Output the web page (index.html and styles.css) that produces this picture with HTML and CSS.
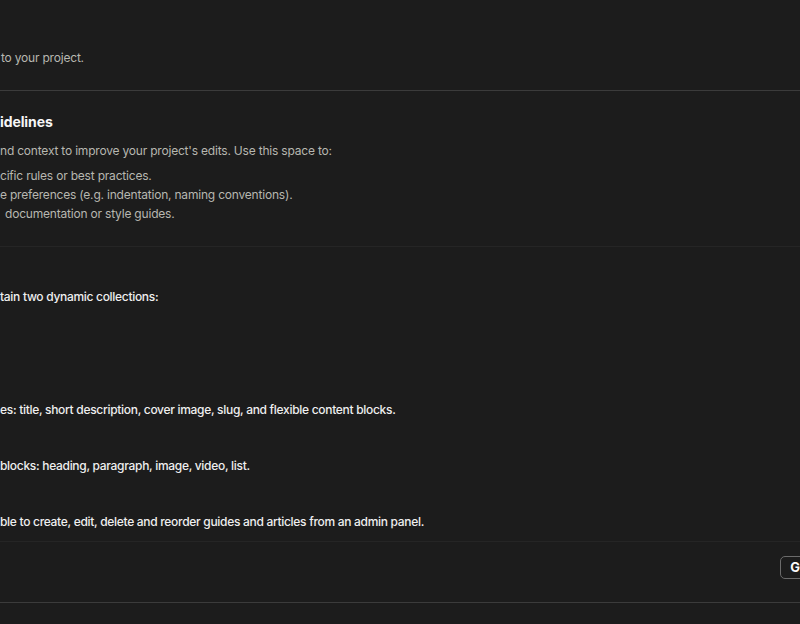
FILE: index.html
```html
<!DOCTYPE html>
<html lang="en">
<head>
  <meta charset="UTF-8" />
  <title>Project settings</title>
  <link rel="stylesheet" href="styles.css">
</head>
<body>
  <div class="panel">
    <div class="intro">
      <p class="muted">to your project.</p>
    </div>

    <div class="guidelines">
      <h2>idelines</h2>
      <p class="muted">nd context to improve your project's edits. Use this space to:</p>
      <ul class="muted">
        <li>cific rules or best practices.</li>
        <li>e preferences (e.g. indentation, naming conventions).</li>
        <li class="indent">documentation or style guides.</li>
      </ul>
    </div>

    <div class="prompt">tain two dynamic collections:





es: title, short description, cover image, slug, and flexible content blocks.


blocks: heading, paragraph, image, video, list.


ble to create, edit, delete and reorder guides and articles from an admin panel.</div>

    <div class="actions">
      <button class="btn">G</button>
    </div>
  </div>
</body>
</html>
```

FILE: styles.css
```css
html, body {
  margin: 0;
  padding: 0;
  background: #1c1c1c;
  font-family: 'Inter', 'Noto Sans', sans-serif;
  font-size: 12px;
  letter-spacing: -0.2px;
  overflow: hidden;
}

.panel {
  width: 810px;
  color: #ececec;
}

p {
  margin: 0;
}

.muted {
  color: #b7b7b0;
}

.intro {
  padding: 48px 0 23px 1px;
  line-height: 19px;
  border-bottom: 1px solid #3b3b3b;
}

.guidelines {
  padding: 20px 0 23px;
  border-bottom: 1px solid #252525;
}

.guidelines h2 {
  margin: 0 0 9px;
  font-size: 14px;
  line-height: 21px;
  font-weight: 700;
  letter-spacing: -0.1px;
  color: #f6f6f6;
}

.guidelines p {
  line-height: 19px;
}

.guidelines ul {
  list-style: none;
  margin: 6px 0 0;
  padding: 0;
  line-height: 19px;
}

.guidelines li.indent {
  padding-left: 5px;
}

.prompt {
  white-space: pre-wrap;
  padding: 41px 0 9px;
  line-height: 18.75px;
  font-weight: 500;
  letter-spacing: -0.3px;
  color: #efefef;
  border-bottom: 1px solid #252525;
}

.actions {
  display: flex;
  justify-content: flex-end;
  padding: 14px 0 23px;
  border-bottom: 1px solid #3b3b3b;
}

.btn {
  height: 23px;
  padding: 0 9px;
  background: #1c1c1c;
  border: 1px solid #6b6b6b;
  border-radius: 5px;
  color: #fafafa;
  font-family: inherit;
  font-size: 13px;
  font-weight: 700;
}
```
